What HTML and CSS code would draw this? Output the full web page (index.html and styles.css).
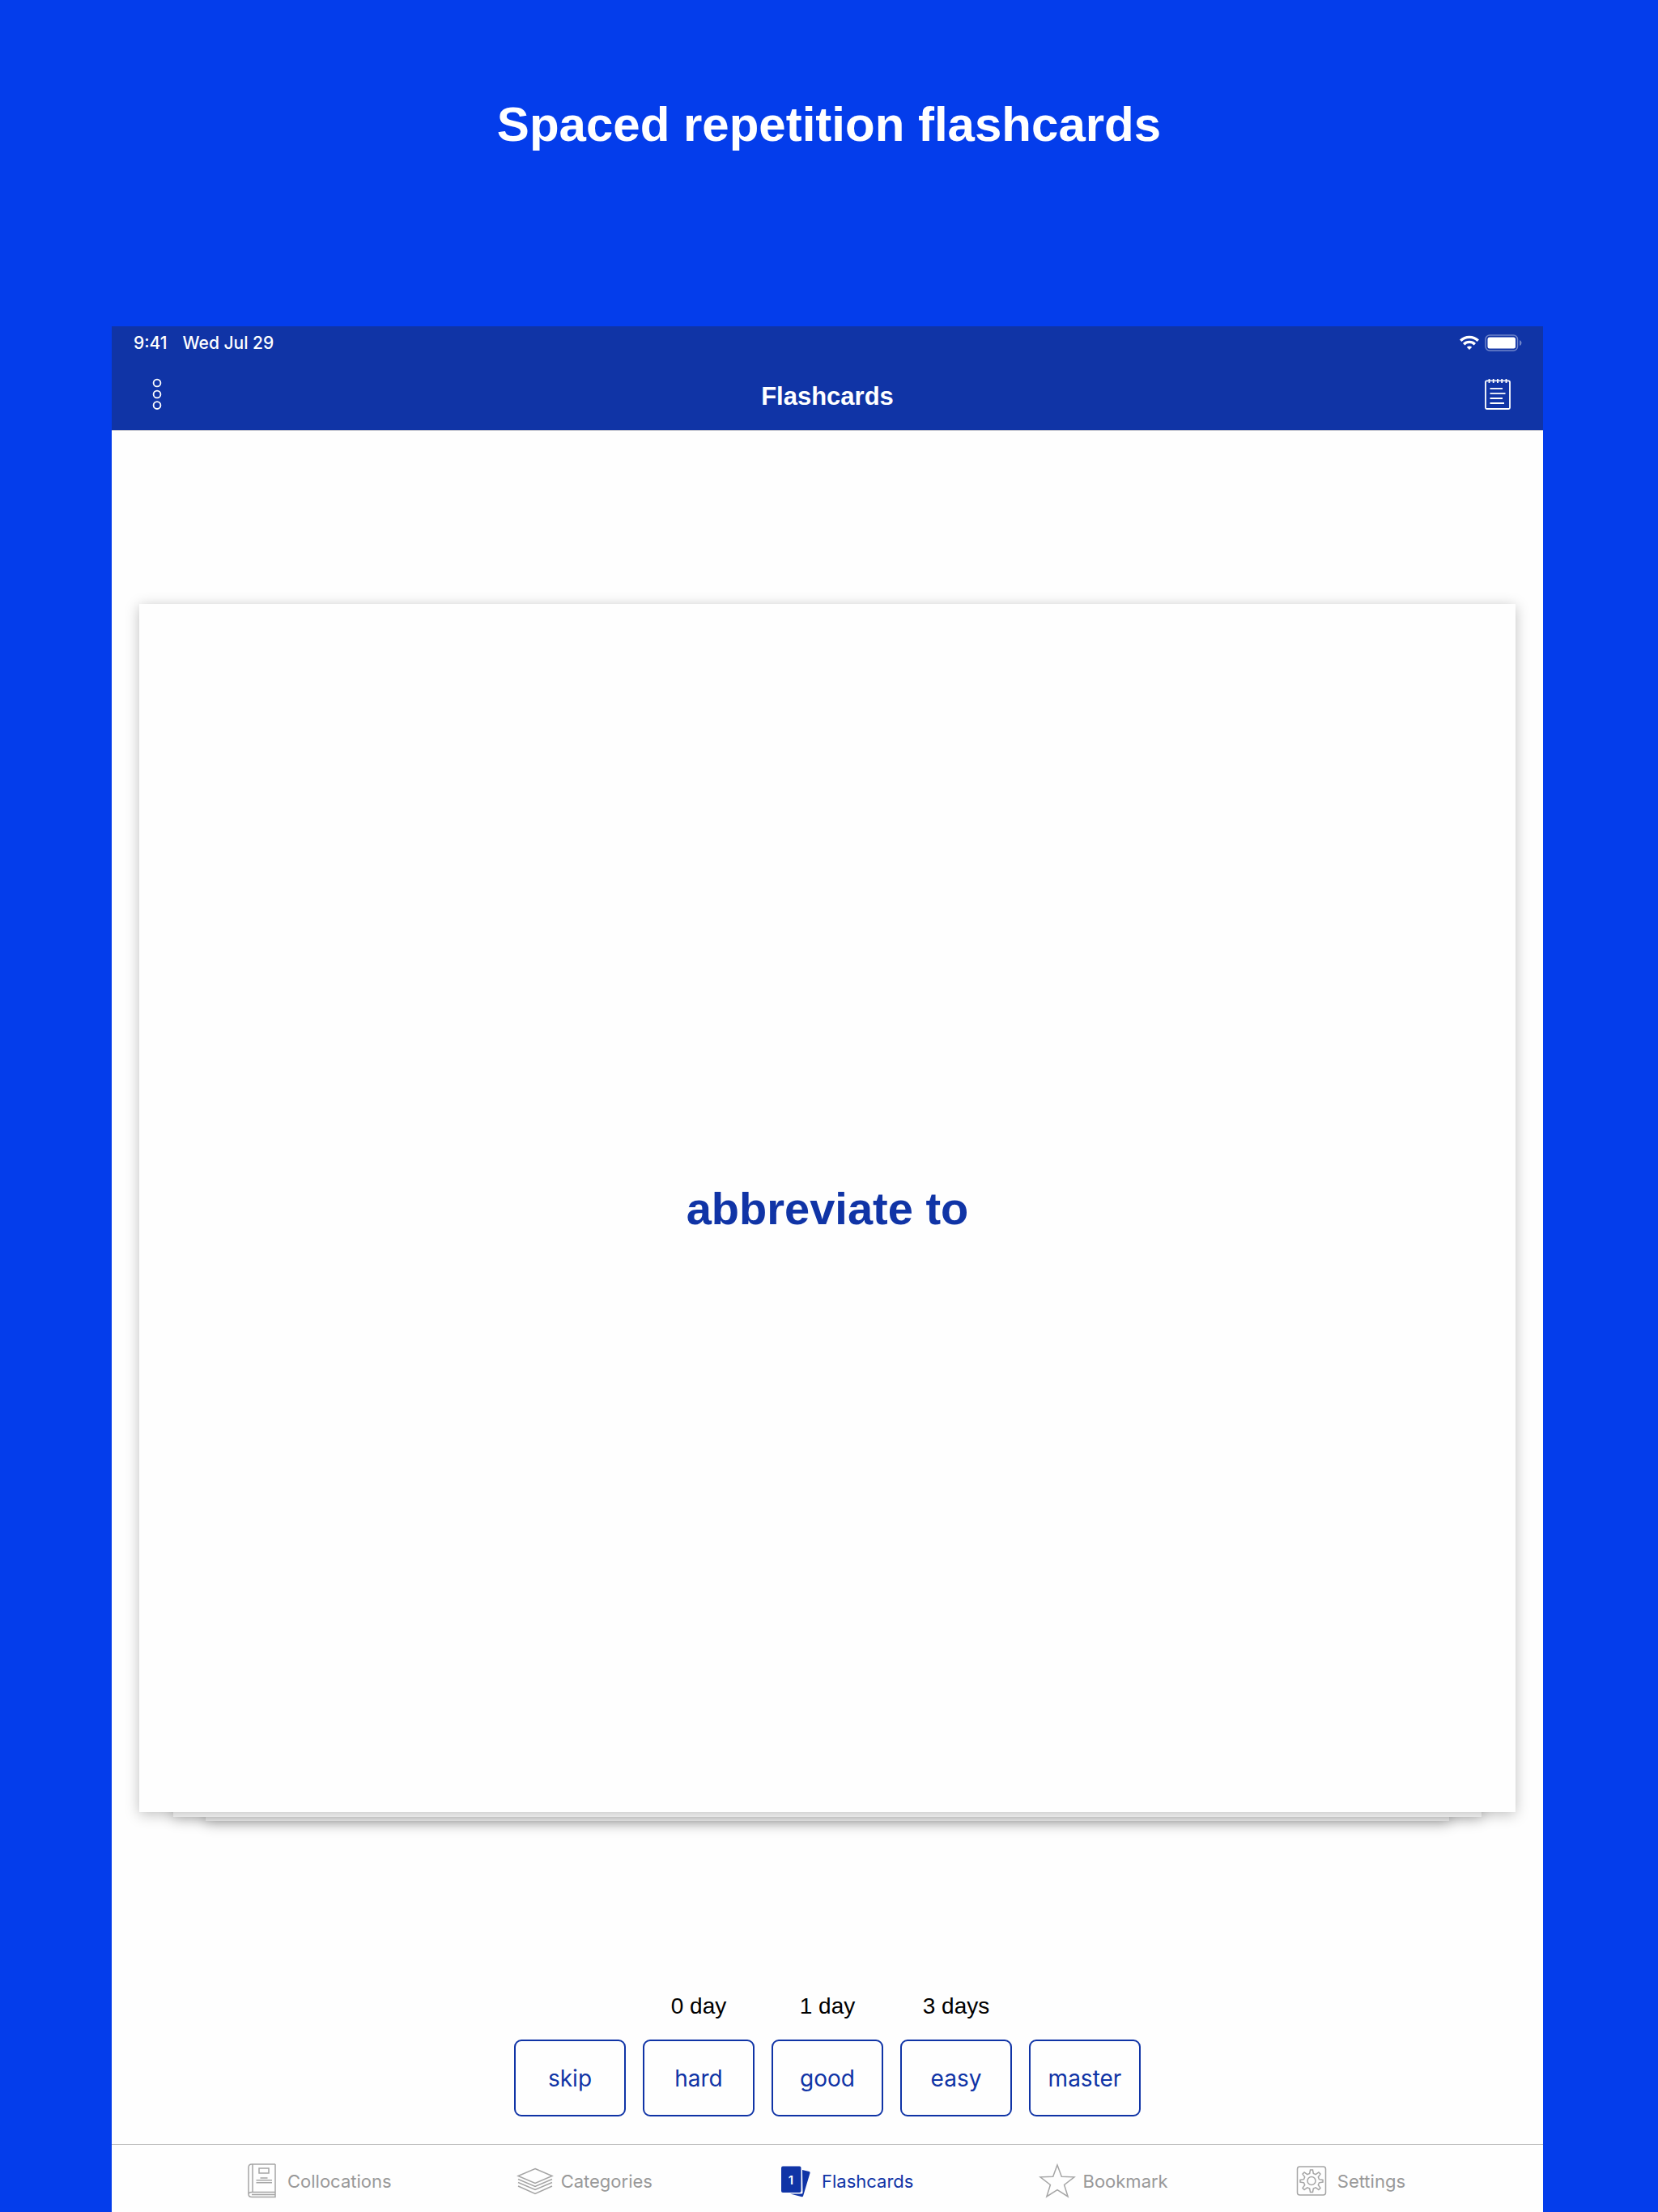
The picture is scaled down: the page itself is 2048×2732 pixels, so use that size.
FILE: index.html
```html
<!DOCTYPE html>
<html lang="en">
<head>
    <meta charset="UTF-8">
    <meta name="viewport" content="width=device-width, initial-scale=1.0">
    <title>Spaced repetition flashcards</title>
    <link rel="stylesheet" href="styles.css">
</head>
<body>
    <h1 class="headline">Spaced repetition flashcards</h1>
    <div class="screen">
        <header class="header">
            <div class="status-bar">
                <div class="status-left">
                    <span>9:41</span>
                    <span>Wed Jul 29</span>
                </div>
                <div class="status-right">
                    <svg width="24" height="18" viewBox="0 0 24 18" fill="none" stroke="#fff" stroke-width="3.400">
                        <path d="M1.2 6.800a15.400 15.400 0 0 1 21.600 0"/>
                        <path d="M5.200 11.200a9.600 9.600 0 0 1 13.600 0"/>
                        <path d="M12 18l-3.200-3.300a4.600 4.600 0 0 1 6.400 0z" fill="#fff" stroke="none"/>
                    </svg>
                    <svg width="46" height="21" viewBox="0 0 46 21">
                        <rect x="1" y="1" width="39.500" height="19" rx="5" fill="none" stroke="#7085ca" stroke-width="1.500"/>
                        <rect x="3.500" y="3.500" width="34.500" height="14" rx="2.500" fill="#fff"/>
                        <path d="M43 7v7q2.500-1 2.500-3.500T43 7z" fill="#7085ca"/>
                    </svg>
                </div>
            </div>
            <div class="nav-bar">
                <button class="icon-btn" aria-label="Menu">
                    <svg width="12" height="40" viewBox="0 0 12 40" fill="none" stroke="#fff" stroke-width="1.800">
                        <circle cx="6" cy="6" r="4.400"/>
                        <circle cx="6" cy="20" r="4.400"/>
                        <circle cx="6" cy="33.600" r="4.400"/>
                    </svg>
                </button>
                <h2 class="nav-title">Flashcards</h2>
                <button class="icon-btn" aria-label="Notes">
                    <svg width="32" height="40" viewBox="0 0 32 40" fill="none" stroke="#fff" stroke-width="1.800">
                        <path d="M4 3.300H2.500Q1 3.300 1 5v31.500Q1 38 2.500 38h27q1.500 0 1.500-1.500V5q0-1.700-1.500-1.700H28"/>
                        <path d="M4 3.300h24" stroke-width="1.500"/>
                        <path d="M5.500 1v5M10.700 1v5M16 1v5M21.200 1v5M26.500 1v5"/>
                        <path d="M6.500 12.800h15.500M6.500 18.900h19M6.500 25h15.500M6.500 31h17.500"/>
                    </svg>
                </button>
            </div>
        </header>
        <main class="main">
            <div class="deck">
                <div class="card card-back"></div>
                <div class="card card-middle"></div>
                <div class="card card-front">abbreviate to</div>
            </div>
            <div class="ratings">
                <div class="rating">
                    <button class="rating-btn">skip</button>
                </div>
                <div class="rating">
                    <span class="interval" id="hard-interval">0 day</span>
                    <button class="rating-btn" aria-describedby="hard-interval">hard</button>
                </div>
                <div class="rating">
                    <span class="interval" id="good-interval">1 day</span>
                    <button class="rating-btn" aria-describedby="good-interval">good</button>
                </div>
                <div class="rating">
                    <span class="interval" id="easy-interval">3 days</span>
                    <button class="rating-btn" aria-describedby="easy-interval">easy</button>
                </div>
                <div class="rating">
                    <button class="rating-btn">master</button>
                </div>
            </div>
        </main>
        <nav class="tab-bar">
            <a class="tab" href="#collocations">
                <svg class="tab-icon" viewBox="0 0 46 44">
                    <path d="M40 2H11Q7 2 7 6v33q0 3.500 4 3.500h29V2M12 2v34.500M7 39.500q0-3 4-3h29M11 39.500h29"/>
                    <path d="M20 7h12v6H20zM21.500 19h9M16.500 21.800h19.500M16.500 24.700h19.500"/>
                </svg>
                Collocations
            </a>
            <a class="tab" href="#categories">
                <svg class="tab-icon" viewBox="0 0 46 44">
                    <path d="M23 7.500L44 16.500 23 25.500 2 16.500z"/>
                    <path d="M2 20.500l21 9 21-9M2 24.500l21 9 21-9M2 29l21 9.500 21-9.500"/>
                </svg>
                Categories
            </a>
            <a class="tab active" href="#flashcards">
                <svg class="tab-icon" viewBox="0 0 46 44">
                    <path d="M31 9l8.500 2q1.500.4 1 2L32 41.500q-.4 1-1.500.8L16 38.500h14q1.500 0 1.500-1.500z" fill="#1034a6" stroke="none"/>
                    <rect x="5" y="4.500" width="24.500" height="32.500" rx="2" fill="#1034a6" stroke="none"/>
                    <text x="17" y="26.500" class="card-number">1</text>
                </svg>
                Flashcards
            </a>
            <a class="tab" href="#bookmark">
                <svg class="tab-icon" viewBox="0 0 46 44">
                    <path d="M23 3l5.300 14.200 15.700.6-12.400 9.700 4.500 14.500L23 33.700 9.900 42l4.500-14.500L2 17.800l15.700-.6z"/>
                </svg>
                Bookmark
            </a>
            <a class="tab" href="#settings">
                <svg class="tab-icon" viewBox="0 0 46 44">
                    <rect x="5.500" y="5" width="35" height="35" rx="3"/>
                    <circle cx="23" cy="22.500" r="5"/>
                    <path d="M21.500 9h3l.8 4.500 2.900 1.200 3.700-2.700 2.100 2.100-2.700 3.700 1.200 2.900 4.500.8v2.500l-4.500.8-1.200 2.900 2.700 3.700-2.100 2.100-3.700-2.700-2.900 1.200-.8 4.500h-3l-.8-4.500-2.900-1.200-3.700 2.700-2.100-2.100 2.700-3.700-1.200-2.900-4.500-.8v-2.500l4.500-.8 1.200-2.900-2.700-3.700 2.100-2.100 3.700 2.700 2.900-1.200z"/>
                </svg>
                Settings
            </a>
        </nav>
    </div>
</body>
</html>
```

FILE: styles.css
```css
* {
    box-sizing: border-box;
}
body {
    margin: 0;
    min-height: 100vh;
    display: flex;
    flex-direction: column;
    background-color: #043deb;
    font-family: Inter, "Liberation Sans", sans-serif;
}
button {
    font: inherit;
    background: none;
    cursor: pointer;
}
svg {
    display: block;
}
.headline {
    margin: 0;
    padding: 120px 0 215px;
    font: bold 60px/68px "Liberation Sans", Arial, sans-serif;
    color: #fff;
    text-align: center;
}
.screen {
    flex: 1;
    display: flex;
    flex-direction: column;
    margin: 0 142px 0 138px;
    background-color: #fefefe;
}

/* Header */
.header {
    background-color: #1034a6;
    color: #fff;
    border-bottom: 1px solid #b9bcc8;
}
.status-bar {
    display: flex;
    justify-content: space-between;
    align-items: center;
    height: 40px;
    padding: 0 26px 0 27px;
    font-size: 21px;
    font-weight: 500;
}
.status-left {
    display: flex;
    gap: 19px;
}
.status-right {
    display: flex;
    align-items: center;
    gap: 7px;
}
.nav-bar {
    display: flex;
    justify-content: space-between;
    align-items: center;
    height: 88px;
    padding: 0 40px;
}
.icon-btn {
    width: 32px;
    padding: 0;
    border: none;
    display: flex;
    justify-content: center;
}
.nav-title {
    margin: 0;
    padding-top: 6px;
    font: bold 31px/36px "Liberation Sans", Arial, sans-serif;
}

/* Cards */
.main {
    flex: 1;
    display: flex;
    flex-direction: column;
    padding: 214px 34px 34px;
}
.deck {
    flex: 1;
    display: flex;
    position: relative;
}
.card {
    background-color: #fefefe;
    box-shadow: 0 3px 16px rgba(0, 0, 0, 0.25);
}
.card-front {
    flex: 1;
    display: flex;
    justify-content: center;
    align-items: center;
    position: relative;
    padding-top: 2px;
    color: #1034a6;
    font: bold 56px/64px "Liberation Sans", Arial, sans-serif;
}
.card-middle, .card-back {
    position: absolute;
    height: 100px;
}
.card-middle {
    left: 42px;
    right: 42px;
    bottom: -6px;
}
.card-back {
    left: 82px;
    right: 82px;
    bottom: -11px;
}

/* Rating buttons */
.ratings {
    display: flex;
    justify-content: center;
    align-items: flex-end;
    gap: 21px;
    padding-top: 223px;
}
.rating {
    display: flex;
    flex-direction: column;
    gap: 24px;
    width: 138px;
}
.interval {
    font: 28px/34px "Liberation Sans", Arial, sans-serif;
    text-align: center;
    color: #000;
}
.rating-btn {
    height: 95px;
    padding: 0;
    border: 2px solid #1034a6;
    border-radius: 9px;
    color: #1034a6;
    font-size: 28px;
}

/* Tab bar */
.tab-bar {
    display: flex;
    justify-content: space-between;
    padding: 22px 170px 15px 162px;
    border-top: 1px solid #b9b9b9;
}
.tab {
    display: flex;
    align-items: flex-start;
    gap: 9px;
    font-size: 22px;
    line-height: 46px;
    color: #999;
    text-decoration: none;
}
.tab.active {
    color: #1034a6;
}
.tab-icon {
    width: 46px;
    height: 44px;
    fill: none;
    stroke: #a5a5a5;
    stroke-width: 1.5;
}
.card-number {
    fill: #fff;
    stroke: none;
    font-size: 15px;
    font-weight: 600;
    text-anchor: middle;
}
```
